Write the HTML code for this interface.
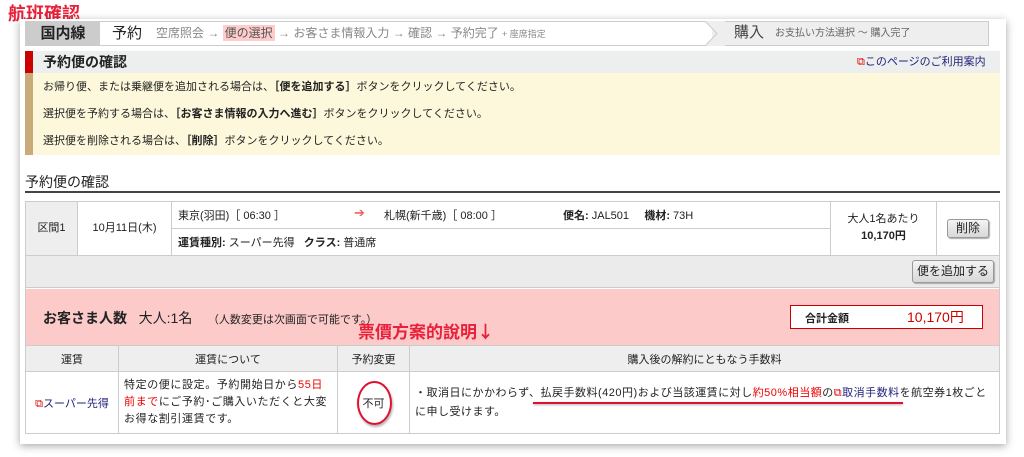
<!DOCTYPE html><html><head><meta charset="utf-8"><style>
*{margin:0;padding:0;box-sizing:border-box}
body{width:1024px;height:457px;background:#fff;position:relative;font-family:"Liberation Sans","Noto Sans CJK JP",sans-serif;font-size:12px;color:#222;overflow:hidden}
.a{position:absolute}
.card{left:20px;top:19px;width:986px;height:425px;background:#fff;box-shadow:0 2px 8px rgba(0,0,0,.35)}
table{border-collapse:collapse}
td{border:1px solid #ccc}
.btn{position:absolute;background:linear-gradient(#f4f4f4,#d8d8d8);border:1px solid #999;border-radius:3px;font-size:12px;text-align:center;box-shadow:1px 1px 1px #aaa}
</style></head><body>
<div class="a" style="left:8px;top:1px;color:#e8203a;font-size:18px;font-weight:bold;font-family:'Noto Sans CJK TC',sans-serif;line-height:24px">航班確認</div>
<div class="a card"></div>
<div class="a" style="left:25px;top:21px;width:964px;height:25px;border:1px solid #ccc;background:#fff"></div>
<div class="a" style="left:26px;top:22px;width:74px;height:23px;background:#ccc;font-size:15px;font-weight:bold;text-align:center;line-height:23px">国内線</div>
<div class="a" style="left:112px;top:22px;font-size:15px;line-height:23px">予約</div>
<div class="a" style="left:156px;top:22px;font-size:12px;line-height:23px;color:#888;white-space:nowrap">空席照会 → <span style="background:#fcc;color:#555;padding:1px 2px">便の選択</span> → お客さま情報入力 → 確認 → 予約完了 <span style="font-size:9px">+ 座席指定</span></div>
<div class="a" style="left:712px;top:22px;width:276px;height:23px;background:#eee"></div>
<svg class="a" style="left:705px;top:21px" width="20" height="25"><path d="M0 0 L12 12.5 L0 25 L20 25 L20 0Z" fill="#eee"/><path d="M0 0 L12 12.5 L0 25" fill="none" stroke="#ccc"/></svg>
<div class="a" style="left:734px;top:22px;font-size:15px;line-height:22px;color:#444">購入</div>
<div class="a" style="left:775px;top:22px;font-size:10px;line-height:23px;color:#666">お支払い方法選択 〜 購入完了</div>
<div class="a" style="left:25px;top:51px;width:975px;height:22px;background:#edeeee"></div>
<div class="a" style="left:25px;top:51px;width:8px;height:22px;background:#c00"></div>
<div class="a" style="left:43px;top:51px;font-size:14px;font-weight:bold;line-height:22px">予約便の確認</div>
<div class="a" style="left:857px;top:55px;font-size:11px;color:#22227a;line-height:14px"><span style="color:#d00">⧉</span>このページのご利用案内</div>
<div class="a" style="left:25px;top:73px;width:975px;height:82px;background:#fdf8dc"></div>
<div class="a" style="left:25px;top:73px;width:8px;height:82px;background:#c8ab78"></div>
<div class="a" style="left:43px;top:74px;font-size:11px;line-height:27px">お帰り便、または乗継便を追加される場合は、<b>［便を追加する］</b>ボタンをクリックしてください。<br>選択便を予約する場合は、<b>［お客さま情報の入力へ進む］</b>ボタンをクリックしてください。<br>選択便を削除される場合は、<b>［削除］</b>ボタンをクリックしてください。</div>
<div class="a" style="left:25px;top:172px;font-size:14px;line-height:20px">予約便の確認</div>
<div class="a" style="left:25px;top:191px;width:975px;height:2px;background:#444"></div>
<div class="a" style="left:25px;top:201px;width:975px;height:144px;border:1px solid #ccc"></div>
<div class="a" style="left:26px;top:202px;width:52px;height:53px;background:#eee;border-right:1px solid #ccc;text-align:center;line-height:53px;font-size:11px">区間1</div>
<div class="a" style="left:78px;top:202px;width:94px;height:53px;border-right:1px solid #ccc;text-align:center;line-height:53px;font-size:11px">10月11日(木)</div>
<div class="a" style="left:172px;top:228px;width:658px;height:1px;background:#ccc"></div>
<div class="a" style="left:178px;top:207px;font-size:11px;white-space:nowrap">東京(羽田)［ 06:30 ］</div>
<div class="a" style="left:354px;top:205px;color:#f06060;font-size:13px">➔</div>
<div class="a" style="left:384px;top:207px;font-size:11px;white-space:nowrap">札幌(新千歳)［ 08:00 ］</div>
<div class="a" style="left:563px;top:207px;font-size:11px;white-space:nowrap"><b>便名:</b> JAL501 &nbsp;&nbsp;&nbsp;&nbsp;<b>機材:</b> 73H</div>
<div class="a" style="left:178px;top:234px;font-size:11px;white-space:nowrap"><b>運賃種別:</b> スーパー先得 &nbsp;&nbsp;<b>クラス:</b> 普通席</div>
<div class="a" style="left:830px;top:202px;width:107px;height:53px;border-left:1px solid #ccc;border-right:1px solid #ccc;text-align:center;font-size:11px;line-height:17px;padding-top:9px">大人1名あたり<br><b>10,170円</b></div>
<div class="btn" style="left:947px;top:219px;width:42px;height:19px;line-height:17px">削除</div>
<div class="a" style="left:26px;top:255px;width:973px;height:33px;background:#ebebeb;border-top:1px solid #ccc;border-bottom:1px solid #ccc"></div>
<div class="btn" style="left:912px;top:260px;width:82px;height:23px;line-height:21px">便を追加する</div>
<div class="a" style="left:26px;top:289px;width:973px;height:56px;background:#fdcaca"></div>
<div class="a" style="left:43px;top:309px;font-size:14px;line-height:18px;white-space:nowrap"><b>お客さま人数</b>&nbsp;&nbsp;&nbsp;大人:1名 &nbsp;&nbsp;&nbsp;<span style="font-size:11px">（人数変更は次画面で可能です。）</span></div>
<div class="a" style="left:790px;top:305px;width:193px;height:24px;background:#fff;border:1px solid #c00"></div>
<div class="a" style="left:805px;top:310px;font-size:11px;font-weight:bold">合計金額</div>
<div class="a" style="left:907px;top:307px;font-size:14px;color:#c00">10,170円</div>
<div class="a" style="left:358px;top:320px;color:#e8203a;font-size:17px;font-weight:bold;font-family:'Noto Sans CJK TC',sans-serif;line-height:22px;white-space:nowrap">票價方案的說明↓</div>
<table class="a" style="left:25px;top:345px;width:975px;font-size:11px">
<tr style="background:#eee;height:26px;text-align:center"><td style="width:93px">運賃</td><td style="width:219px">運賃について</td><td style="width:72px">予約変更</td><td>購入後の解約にともなう手数料</td></tr>
<tr style="height:62px"><td style="text-align:center;color:#22227a"><span style="color:#d00">⧉</span>スーパー先得</td><td style="padding:0 5px;line-height:17px;letter-spacing:0.6px">特定の便に設定。予約開始日から<span style="color:#e00">55日前まで</span>にご予約･ご購入いただくと大変お得な割引運賃です。</td><td style="text-align:center">不可</td><td style="padding:0 5px;line-height:19px;letter-spacing:0.5px">・取消日にかかわらず、払戻手数料(420円)および当該運賃に対し<span style="color:#e00">約50%相当額</span>の<span style="color:#22227a"><span style="color:#d00">⧉</span>取消手数料</span>を航空券1枚ごとに申し受けます。</td></tr>
</table>
<div class="a" style="left:357px;top:381px;width:35px;height:44px;border:2px solid #e01030;border-radius:50%;box-shadow:1px 2px 2px rgba(0,0,0,.3)"></div>
<div class="a" style="left:533px;top:402px;width:370px;height:2px;background:#e01030;box-shadow:0 1px 2px rgba(0,0,0,.3)"></div>
</body></html>
